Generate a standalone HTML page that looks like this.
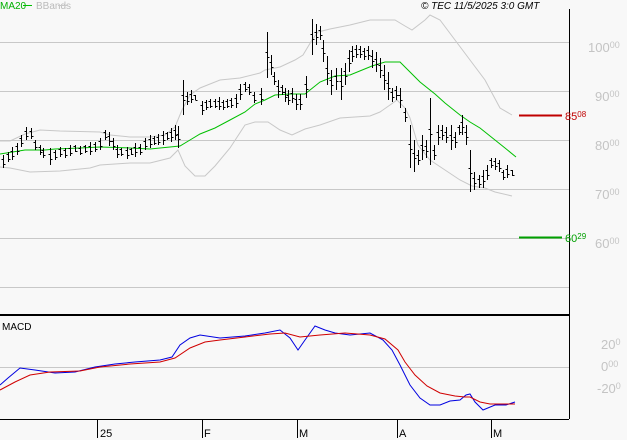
<!DOCTYPE html>
<html><head><meta charset="utf-8"><style>
html,body{margin:0;padding:0;background:#f8f8f8;}
svg{display:block;font-family:"Liberation Sans",sans-serif;}
</style></head><body>
<svg id="s" width="627" height="440" viewBox="0 0 627 440" xmlns="http://www.w3.org/2000/svg">
<rect width="627" height="440" fill="#f8f8f8"/>
<g stroke="#c8c8c8" stroke-width="1">
<line x1="0" y1="42.5" x2="569" y2="42.5"/>
<line x1="0" y1="91.5" x2="569" y2="91.5"/>
<line x1="0" y1="140.5" x2="569" y2="140.5"/>
<line x1="0" y1="189.5" x2="569" y2="189.5"/>
<line x1="0" y1="238.5" x2="569" y2="238.5"/>
<line x1="0" y1="287.5" x2="569" y2="287.5"/>
<line x1="0" y1="367.5" x2="569" y2="367.5"/>
</g>
<line x1="569.5" y1="9" x2="569.5" y2="419" stroke="#000"/>
<line x1="0" y1="315" x2="569" y2="315" stroke="#000" stroke-width="2"/>
<line x1="0" y1="419.5" x2="569" y2="419.5" stroke="#000"/>
<g stroke="#000">
<line x1="97.5" y1="419" x2="97.5" y2="438"/><line x1="202.5" y1="419" x2="202.5" y2="438"/>
<line x1="297.5" y1="419" x2="297.5" y2="438"/><line x1="397.5" y1="419" x2="397.5" y2="438"/>
<line x1="491.5" y1="419" x2="491.5" y2="438"/>
</g>
<g font-size="11" fill="#000">
<text x="100" y="437">25</text><text x="204" y="437">F</text><text x="299" y="437">M</text><text x="399" y="437">A</text><text x="493" y="437">M</text>
</g>
<g font-size="10" fill="#000" font-style="italic"><text x="421" y="9">© TEC 11/5/2025 3:0 GMT</text></g>
<text x="0" y="9" font-size="10" fill="#00b000">MA20</text>
<line x1="23" y1="5.5" x2="32" y2="5.5" stroke="#00c000"/>
<text x="36" y="9" font-size="10" fill="#bbb">BBands</text>
<line x1="58" y1="5.5" x2="67" y2="5.5" stroke="#c8c8c8"/>
<text x="2" y="330" font-size="10" fill="#000">MACD</text>
<g font-size="13" fill="#c4c4c4">
<text x="588" y="52">100<tspan font-size="9" dy="-4">00</tspan></text>
<text x="595" y="101">90<tspan font-size="9" dy="-4">00</tspan></text>
<text x="595" y="150">80<tspan font-size="9" dy="-4">00</tspan></text>
<text x="595" y="199">70<tspan font-size="9" dy="-4">00</tspan></text>
<text x="595" y="248">60<tspan font-size="9" dy="-4">00</tspan></text>
<text x="601" y="349">20<tspan font-size="9" dy="-4">0</tspan></text>
<text x="601" y="371">0<tspan font-size="9" dy="-4">00</tspan></text>
<text x="597" y="393">-20<tspan font-size="9" dy="-4">0</tspan></text>
</g>
<line x1="519" y1="115.5" x2="562" y2="115.5" stroke="#c00000" stroke-width="2"/>
<text x="565" y="120" font-size="11" fill="#c00000">85<tspan font-size="8" dy="-3">08</tspan></text>
<line x1="519" y1="237.5" x2="562" y2="237.5" stroke="#00a000" stroke-width="2"/>
<text x="565" y="242" font-size="11" fill="#00a000">60<tspan font-size="8" dy="-3">29</tspan></text>
<g fill="none" stroke="#c8c8c8">
<polyline points="0,141 10,141 25,134 40,130 60,131 100,132 110,135 130,137 150,137 165,135 175,127 182,110 190,95 200,88 220,80 240,78 260,73 265,70 280,67 295,60 303,55 312,40 318,32 330,29 350,25 370,20 395,20 405,26 412,30 425,20 430,15 440,20 455,40 470,60 485,80 500,108 512,115"/>
<polyline points="0,167 10,168 30,172 60,171 90,168 100,165 130,163 150,163 170,158 178,150 185,166 195,176 205,176 215,166 230,148 245,125 255,122 255,122 268,122 280,130 292,135 305,129 320,125 340,118 370,116 380,112 390,105 397,100 405,108 410,118 418,145 430,160 445,170 460,180 472,186 485,188 495,192 512,196"/>
</g>
<polyline fill="none" stroke="#00c000" points="0,154 25,150 45,150 55,149 80,148 100,147 130,148 150,149 170,147 180,146 190,140 200,134 215,128 230,120 245,112 255,104 265,100 275,95 290,94 305,94 320,82 335,76 350,75 372,66 385,62 390,62 400,62 410,72 420,82 435,94 445,103 460,115 470,122 480,128 490,136 505,148 516,157"/>
<g id="bars" stroke="#000"></g>
<polyline fill="none" stroke="#0000e0" points="0,385 8,378 20,368 35,370 55,373 75,372 95,367 115,364 135,362 160,360 172,357 180,345 190,338 200,335 220,338 245,336 265,333 280,330 290,338 298,350 305,340 315,326 325,330 335,333 350,335 370,333 383,340 392,350 400,365 410,385 420,398 430,405 440,405 450,401 460,400 466,395 470,394 475,402 483,410 495,405 506,405 515,402"/>
<polyline fill="none" stroke="#d00000" points="0,390 15,382 30,375 50,372 80,371 100,367 130,364 160,362 175,358 190,348 205,342 220,340 245,337 270,334 285,333 300,337 320,335 345,333 370,335 385,339 398,350 405,362 415,375 427,386 440,393 455,396 465,397 470,397 480,402 490,404 515,404"/>
</svg>
<script>
var d=[[3,155,168],[8,152,162],[12,147,160],[17,143,155],[21,135,147],[26,127,140],[31,128,139],[35,140,150],[40,145,155],[43,148,158],[50,148,165],[55,150,160],[60,147,157],[65,148,158],[70,145,156],[75,145,152],[80,146,155],[85,145,153],[90,142,155],[95,142,152],[100,138,150],[105,130,140],[109,132,146],[113,138,150],[117,145,158],[121,148,156],[127,147,159],[131,148,155],[135,143,157],[140,144,155],[145,138,150],[150,135,148],[154,136,145],[158,134,145],[163,131,145],[167,132,140],[171,128,142],[175,125,140],[178,126,148],[183,80,115],[187,92,105],[191,90,103],[195,95,100],[202,101,115],[206,100,110],[210,99,108],[215,99,108],[219,97,110],[223,100,110],[227,99,108],[231,98,108],[236,94,108],[240,84,100],[245,82,92],[249,84,95],[254,92,103],[261,88,105],[267,32,78],[271,55,75],[274,72,85],[278,80,98],[282,85,95],[285,88,102],[288,90,105],[292,88,103],[296,94,110],[300,94,110],[306,76,98],[312,19,55],[316,24,45],[320,26,40],[323,40,62],[327,56,85],[331,70,95],[336,68,90],[341,68,100],[345,63,85],[349,50,72],[352,46,62],[356,45,58],[360,46,58],[364,48,60],[368,46,60],[372,50,68],[376,52,72],[380,58,78],[384,65,90],[388,72,100],[392,88,102],[396,86,100],[400,88,108],[405,108,122],[410,125,168],[414,140,172],[418,150,165],[422,135,160],[426,140,158],[430,98,165],[434,145,160],[438,125,145],[442,125,140],[446,127,143],[451,125,150],[455,132,148],[459,125,135],[462,115,135],[466,125,145],[470,150,192],[474,172,190],[479,175,188],[483,170,188],[487,165,180],[491,158,168],[495,158,170],[499,160,172],[503,170,180],[507,165,178],[512,170,176]];
var g=document.getElementById('bars'),h='';
d.forEach(function(b){var x=b[0]+0.5,m=Math.round((b[1]+b[2])/2);h+='<line x1="'+x+'" y1="'+b[1]+'" x2="'+x+'" y2="'+b[2]+'"/><line x1="'+(x-2)+'" y1="'+(m-2.5)+'" x2="'+x+'" y2="'+(m-2.5)+'"/><line x1="'+x+'" y1="'+(m+2.5)+'" x2="'+(x+2)+'" y2="'+(m+2.5)+'"/>';});
g.innerHTML=h;
</script>
</body></html>
